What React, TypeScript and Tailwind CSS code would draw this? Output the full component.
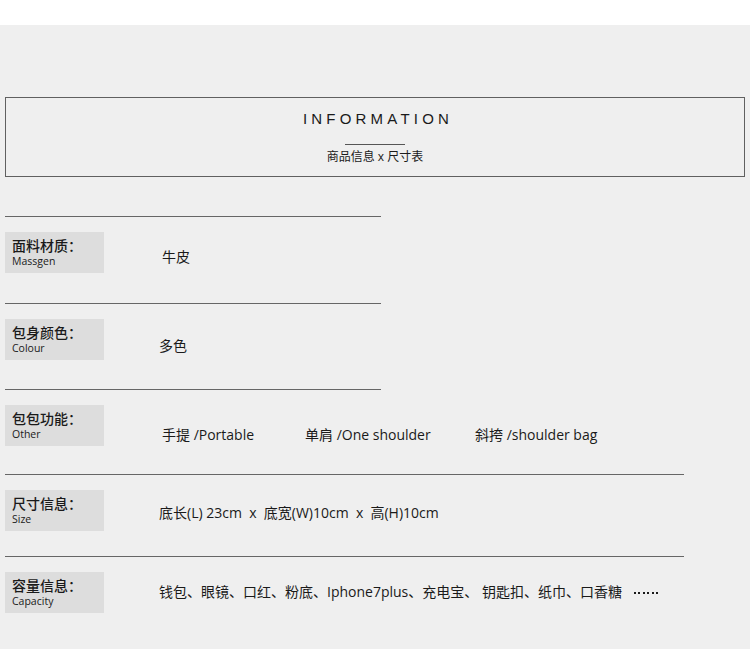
const cjk = { fontFamily: '"Open Sans", "Noto Sans CJK SC", sans-serif' };

type Row = {
  label: string;
  en: string;
  height: string;
  valueTop: string;
  valueLeft: string;
  values: { text: string; width?: string }[];
  lineWidth: string;
};

const rows: Row[] = [
  { label: '面料材质：', en: 'Massgen', height: 'h-[87px]', valueTop: 'mt-[15px]', valueLeft: 'ml-[58px]', lineWidth: 'w-[376px]', values: [{ text: '牛皮' }] },
  { label: '包身颜色：', en: 'Colour', height: 'h-[86px]', valueTop: 'mt-[17px]', valueLeft: 'ml-[55px]', lineWidth: 'w-[376px]', values: [{ text: '多色' }] },
  {
    label: '包包功能：',
    en: 'Other',
    height: 'h-[85px]',
    valueTop: 'mt-[20px]',
    valueLeft: 'ml-[58px]',
    lineWidth: 'w-[376px]',
    values: [
      { text: '手提 /Portable', width: 'w-[143px]' },
      { text: '单肩 /One shoulder', width: 'w-[170px]' },
      { text: '斜挎 /shoulder bag' },
    ],
  },
  { label: '尺寸信息：', en: 'Size', height: 'h-[82px]', valueTop: 'mt-[13px]', valueLeft: 'ml-[55px]', lineWidth: 'w-[679px]', values: [{ text: '底长(L) 23cm  x  底宽(W)10cm  x  高(H)10cm' }] },
  { label: '容量信息：', en: 'Capacity', height: 'h-[93px]', valueTop: 'mt-[10px]', valueLeft: 'ml-[55px]', lineWidth: 'w-[679px]', values: [{ text: '钱包、眼镜、口红、粉底、Iphone7plus、充电宝、 钥匙扣、纸巾、口香糖' }] },
];

export default function App() {
  return (
    <div className="w-[750px] h-[669px] bg-white" style={cjk}>
      <div className="h-[25px]" />
      <div className="bg-[#efefef] pt-[72px] px-[5px] text-[#1a1a1a]">
        {/* header box */}
        <div className="h-[80px] border border-[#606060] flex flex-col items-center">
          <div
            className="mt-[12px] text-[15px] leading-[18px] tracking-[4.2px] pl-[6px] text-[#1a1a1a]"
            style={{ fontFamily: '"Liberation Sans", Arial, sans-serif' }}
          >
            INFORMATION
          </div>
          <div className="mt-[16px] w-[60px] h-px bg-[#555]" />
          <div className="mt-[4px] text-[12px] leading-[16px]">商品信息 x 尺寸表</div>
        </div>

        <div className="h-[39px]" />

        {rows.map((row) => (
          <div key={row.label} className={row.height}>
            <div className={`${row.lineWidth} h-px bg-[#666]`} />
            <div className="flex items-start mt-[15px]">
              <div className="w-[99px] h-[41px] bg-[#dddddd] pl-[7px] pt-[5px]">
                <div className="text-[14px] leading-[17px] font-medium">{row.label}</div>
                <div className="text-[10.5px] leading-[14px]">{row.en}</div>
              </div>
              <div className={`flex items-center ${row.valueTop} ${row.valueLeft} text-[14px] leading-[19px] whitespace-pre`}>
                {row.values.map((v) => (
                  <span key={v.text} className={v.width}>
                    {v.text}
                  </span>
                ))}
                {row.en === 'Capacity' && (
                  <span className="ml-[12px] mt-[2px] flex gap-[2.5px]">
                    {[0, 1, 2, 3, 4, 5].map((i) => (
                      <span key={i} className="w-[2px] h-[2px] bg-[#1a1a1a]" />
                    ))}
                  </span>
                )}
              </div>
            </div>
          </div>
        ))}
      </div>
    </div>
  );
}
